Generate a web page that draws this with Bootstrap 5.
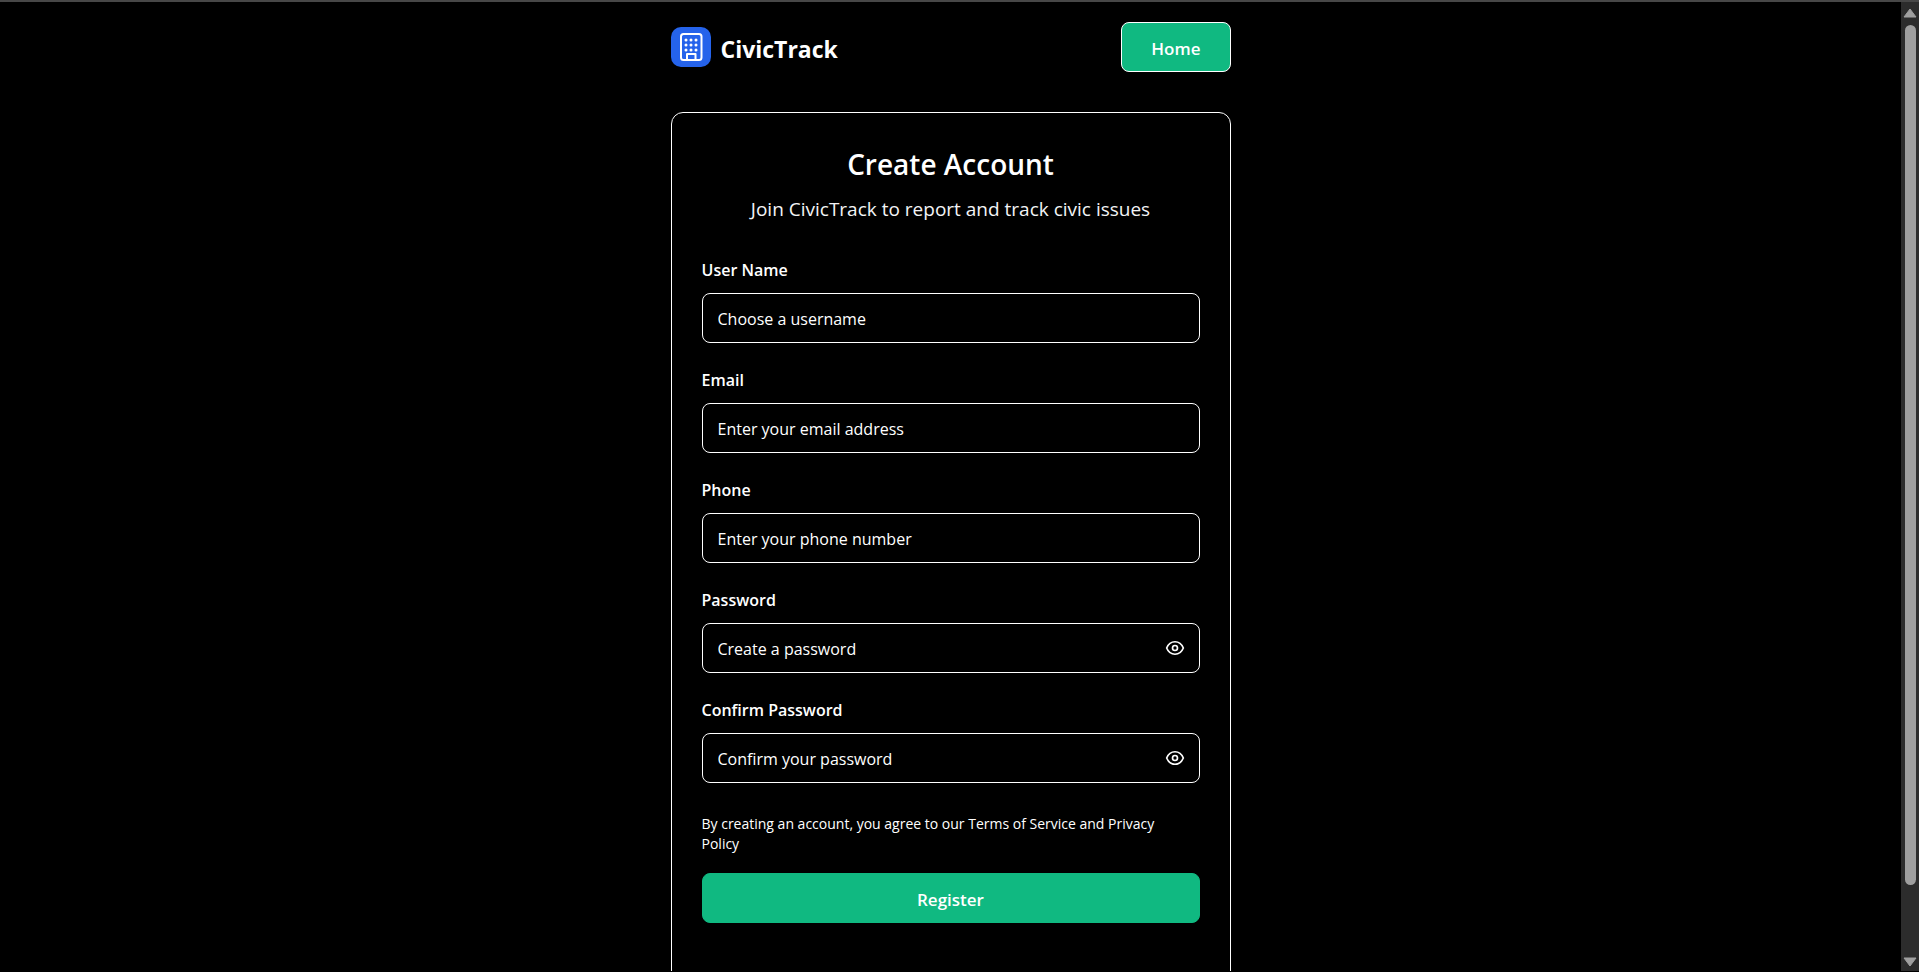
<!DOCTYPE html>
<html lang="en">
<head>
<meta charset="utf-8">
<meta name="viewport" content="width=device-width, initial-scale=1">
<title>CivicTrack - Create Account</title>
<link href="https://cdn.jsdelivr.net/npm/bootstrap@5.3.0/dist/css/bootstrap.min.css" rel="stylesheet">
<style>
  body { background: #000; color: #fff; font-family: "Open Sans", "Noto Sans", sans-serif; font-size: 16px; }
  .app-shell { border-top: 2px solid #474747; border-bottom: 1px solid #000; }
  .page-column { max-width: 560px; }
  .site-header { padding: 20px 0 40px; }
  .brand { font-size: 23px; line-height: 32px; gap: 10px; }
  .brand-name { padding-top: 4px; }
  .brand-icon { width: 40px; height: 40px; border-radius: 10px; background: #2563eb; }
  .btn-civic { --bs-btn-color: #fff; --bs-btn-bg: #10b981; --bs-btn-border-color: #10b981; --bs-btn-hover-color: #fff; --bs-btn-hover-bg: #0ea472; --bs-btn-active-bg: #0d9467; --bs-btn-border-radius: 8px; --bs-btn-font-size: 17px; --bs-btn-font-weight: 600; height: 50px; padding-top: 9px; padding-bottom: 5px; }
  .btn-home { --bs-btn-border-color: #fff; --bs-btn-padding-x: 29px; }
  .form-panel { border: 1px solid #fff; border-radius: 12px; padding: 32px 30px 96px; }
  .form-title { font-size: 28px; line-height: 38px; font-weight: 600; margin-bottom: 12px; }
  .form-subtitle { font-size: 19px; line-height: 28px; margin-bottom: 36px; color: #f3f4f6; }
  .field { margin-bottom: 26px; }
  .field-label { display: block; font-size: 16px; font-weight: 600; line-height: 22px; margin-bottom: 12px; }
  .field-input, .field-input:focus { height: 50px; padding: 2px 15px 0; background: #000; color: #fff; border: 1px solid #fff; border-radius: 8px; font-size: 16px; }
  .field-input::placeholder { color: #fff; opacity: 1; }
  .has-toggle { padding-right: 48px; }
  .eye-toggle { width: 50px; height: 50px; color: #fff; }
  .terms { font-size: 14px; line-height: 20px; padding-top: 5px; margin-bottom: 19px; }
  .scroll-rail { width: 18px; background: #2c2c2c; padding: 6px 0 4px; gap: 7px; }
  .scroll-thumb { width: 11px; height: 93%; border-radius: 6px; background: #9f9f9f; }
</style>
</head>
<body>
<div class="app-shell d-flex vh-100 overflow-hidden">
  <main class="flex-fill overflow-hidden">
    <div class="page-column mx-auto">
      <header class="site-header d-flex justify-content-between align-items-center">
        <a href="#" class="brand d-flex align-items-center fw-bold text-white text-decoration-none">
          <span class="brand-icon d-flex align-items-center justify-content-center">
            <svg width="28" height="30" viewBox="0 0 28 30" fill="none" stroke="#fff" stroke-width="2" stroke-linejoin="round" aria-hidden="true">
              <rect x="4" y="2" width="20.500" height="26" rx="2.500"/>
              <path d="M10 28v-6h8.500v6"/>
              <path d="M9 8h.01M14 8h.01M19 8h.01M9 13h.01M14 13h.01M19 13h.01M9 18h.01M14 18h.01M19 18h.01" stroke-width="3" stroke-linecap="round"/>
            </svg>
          </span>
          <span class="brand-name">CivicTrack</span>
        </a>
        <button type="button" class="btn btn-civic btn-home">Home</button>
      </header>
      <section class="form-panel">
        <h1 class="form-title text-center">Create Account</h1>
        <p class="form-subtitle text-center">Join CivicTrack to report and track civic issues</p>
        <form>
          <div class="field">
            <label class="field-label" for="username">User Name</label>
            <input class="form-control field-input" type="text" id="username" placeholder="Choose a username">
          </div>
          <div class="field">
            <label class="field-label" for="email">Email</label>
            <input class="form-control field-input" type="email" id="email" placeholder="Enter your email address">
          </div>
          <div class="field">
            <label class="field-label" for="phone">Phone</label>
            <input class="form-control field-input" type="tel" id="phone" placeholder="Enter your phone number">
          </div>
          <div class="field">
            <label class="field-label" for="password">Password</label>
            <div class="position-relative">
              <input class="form-control field-input has-toggle" type="password" id="password" placeholder="Create a password">
              <button type="button" class="eye-toggle btn p-0 border-0 position-absolute top-0 end-0 d-flex align-items-center justify-content-center" aria-label="Show password">
                <svg width="20" height="20" viewBox="0 0 24 24" fill="none" stroke="currentColor" stroke-width="2" aria-hidden="true"><path d="M2 12C4 7 7.500 4.500 12 4.500S20 7 22 12C20 17 16.500 19.500 12 19.500S4 17 2 12Z"/><circle cx="12" cy="12" r="3"/></svg>
              </button>
            </div>
          </div>
          <div class="field">
            <label class="field-label" for="confirm">Confirm Password</label>
            <div class="position-relative">
              <input class="form-control field-input has-toggle" type="password" id="confirm" placeholder="Confirm your password">
              <button type="button" class="eye-toggle btn p-0 border-0 position-absolute top-0 end-0 d-flex align-items-center justify-content-center" aria-label="Show confirmed password">
                <svg width="20" height="20" viewBox="0 0 24 24" fill="none" stroke="currentColor" stroke-width="2" aria-hidden="true"><path d="M2 12C4 7 7.500 4.500 12 4.500S20 7 22 12C20 17 16.500 19.500 12 19.500S4 17 2 12Z"/><circle cx="12" cy="12" r="3"/></svg>
              </button>
            </div>
          </div>
          <p class="terms pe-3">By creating an account, you agree to our Terms of Service and Privacy Policy</p>
          <button type="submit" class="btn btn-civic w-100">Register</button>
        </form>
      </section>
    </div>
  </main>
  <div class="scroll-rail d-flex flex-column align-items-center flex-shrink-0" aria-hidden="true">
    <svg class="flex-shrink-0" width="14" height="10" viewBox="0 0 14 10"><path d="M7 1 13 9H1Z" fill="#9f9f9f" stroke="#9f9f9f" stroke-linejoin="round"/></svg>
    <div class="flex-fill"><div class="scroll-thumb"></div></div>
    <svg class="flex-shrink-0" width="14" height="10" viewBox="0 0 14 10"><path d="M7 9 13 1H1Z" fill="#9f9f9f" stroke="#9f9f9f" stroke-linejoin="round"/></svg>
  </div>
</div>
<script src="https://cdn.jsdelivr.net/npm/bootstrap@5.3.0/dist/js/bootstrap.bundle.min.js"></script>
</body>
</html>
